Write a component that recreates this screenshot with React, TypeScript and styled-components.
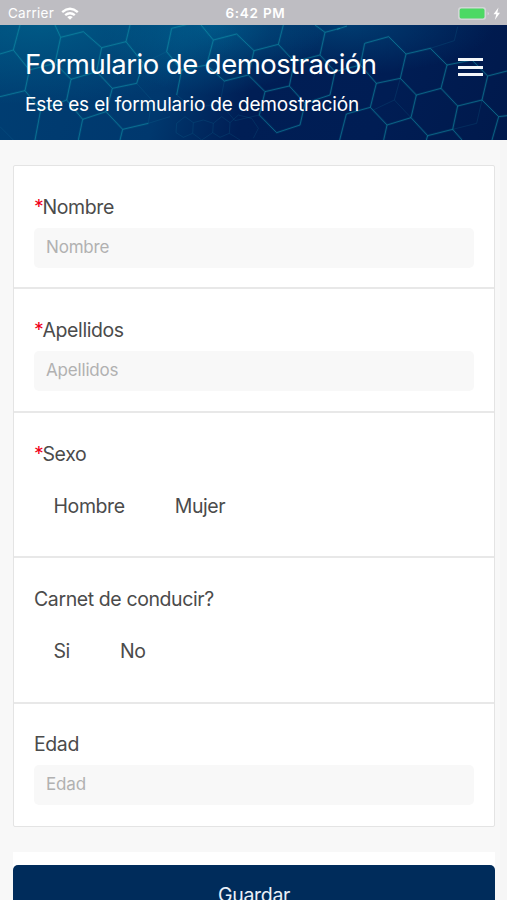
import React from 'react';
import styled, { createGlobalStyle } from 'styled-components';

const GlobalStyle = createGlobalStyle`
  * { box-sizing: border-box; }
  body {
    margin: 0;
    background: #f8f8f8;
    font-family: Inter, 'Liberation Sans', sans-serif;
    color: #4b4b4b;
  }
`;

const Screen = styled.div`
  height: 900px;
  overflow: hidden;
  display: flex;
  flex-direction: column;
  background: linear-gradient(90deg, #f8f8f8 500px, #f6f6f6 500px);
`;

const StatusBar = styled.div`
  flex: none;
  height: 25px;
  padding: 2px 6px 0 8px;
  display: grid;
  grid-template-columns: 1fr auto 1fr;
  align-items: center;
  background: #bebdc2;
  color: #fff;
  font-size: 13.5px;
  line-height: 23px;
`;

const Carrier = styled.div`
  display: flex;
  align-items: center;
  gap: 7px;
  letter-spacing: 0.25px;
`;

const Clock = styled.div`
  font-weight: 600;
  letter-spacing: 0.75px;
  padding-left: 2px;
`;

const Power = styled.div`
  display: flex;
  align-items: center;
  justify-content: flex-end;
`;

const Header = styled.header`
  flex: none;
  height: 115px;
  display: grid;
  background:
    radial-gradient(ellipse 200px 80px at 8% 0, rgba(0, 112, 150, 0.55), transparent),
    radial-gradient(ellipse 110px 70px at 42% 0, rgba(0, 108, 154, 0.6), transparent),
    radial-gradient(ellipse 150px 50px at 68% 0, rgba(0, 90, 140, 0.5), transparent),
    linear-gradient(108deg, #003e72 0%, #00386e 34%, #001e55 50%, #001d54 75%, #00194c 100%);
  color: #fff;
`;

const Pattern = styled.svg`
  grid-area: 1 / 1;
  width: 507px;
  height: 115px;
`;

const HeaderContent = styled.div`
  grid-area: 1 / 1;
  z-index: 1;
  display: flex;
  justify-content: space-between;
  padding: 22px 24px 0 25px;
`;

const Title = styled.h1`
  margin: 0;
  font-size: 27.5px;
  line-height: 34px;
  font-weight: 400;
  letter-spacing: -0.52px;
  white-space: nowrap;
`;

const Subtitle = styled.p`
  margin: 11px 0 0;
  font-size: 19px;
  line-height: 26px;
  letter-spacing: -0.15px;
  white-space: nowrap;
`;

const MenuButton = styled.button`
  margin-top: 11px;
  width: 25px;
  height: 18px;
  padding: 0;
  border: 0;
  background: none;
  display: flex;
  flex-direction: column;
  justify-content: space-between;
`;

const MenuBar = styled.span`
  height: 3px;
  width: 100%;
  background: #f4f7fa;
`;

const Form = styled.form`
  padding: 25px 12px 0 13px;
`;

const Card = styled.div`
  border: 1.5px solid #e4e4e4;
  border-radius: 2px;
  background: #fff;
`;

const Field = styled.section<{ $height: number }>`
  height: ${(p) => p.$height}px;
  padding: 28px 19px 0 20px;
  & + & {
    border-top: 2px solid #e8e8e8;
  }
  &:last-child {
    padding-top: 27px;
  }
`;

const Label = styled.label`
  display: block;
  height: 27px;
  line-height: 26px;
  font-size: 19.5px;
  letter-spacing: -0.4px;
`;

const Required = styled.span`
  display: inline-block;
  width: 8.5px;
  color: #f00018;
  letter-spacing: -1px;
`;

const Input = styled.input`
  display: block;
  width: 440px;
  height: 40px;
  margin-top: 7px;
  padding: 0 12px 2px;
  border: 0;
  border-radius: 5px;
  background: #f8f8f8;
  font: 17px Inter, sans-serif;
  letter-spacing: -0.18px;
  &::placeholder {
    color: #b1b1b1;
    opacity: 1;
  }
`;

const Options = styled.div`
  display: flex;
  gap: 50px;
  margin-top: 25px;
  padding-left: 19.5px;
  font-size: 19.5px;
  line-height: 26px;
  letter-spacing: -0.4px;
`;

const Actions = styled.div`
  margin-top: 25px;
  padding-top: 13px;
  background: #fff;
`;

const SaveButton = styled.button`
  display: block;
  width: 100%;
  height: 60px;
  border: 0;
  border-radius: 5px;
  background: #002c5b;
  color: #e9f0f8;
  font: 19.5px Inter, sans-serif;
  letter-spacing: -0.3px;
`;

const hexLines = [
  'M60 75L40 150L88 210L75 272L122 330L105 420M0 162L40 150M0 290L75 272',
  'M165 75L182 112L250 95L305 143L378 125L390 75M182 112L165 190L213 238L200 300L248 358L235 420M165 190L88 210M122 330L200 300',
  'M305 143L290 215L213 238M290 215L337 265L410 250L430 190L378 125M337 265L318 335L248 358M318 335L368 388L360 420M368 388L445 370',
  'M500 155L515 85L595 65L640 120L710 102L762 152L835 133L850 75M640 120L620 195L545 210L530 285M500 155L545 210',
  'M620 195L673 243L745 225L795 275L868 258L883 185L835 133M762 152L745 225M868 258L915 310L900 375L830 398L778 345L795 275',
  'M945 75L975 97L1020 85M975 97L960 165L883 185M960 165L1005 215L990 285L915 310M1005 215L1081 195',
  'M1094 130L1166 110L1218 162L1291 145L1341 195L1323 265L1249 285L1201 235L1218 162M1094 130L1081 195L1129 250L1201 235',
  'M1129 250L1111 322L1161 375L1233 353L1249 285M1233 353L1283 407L1358 388L1373 318L1323 265M1111 322L1039 342L1019 420M1161 375L1151 420',
  'M1373 318L1446 300L1463 228L1416 180L1341 195M1463 228L1521 213M1446 300L1496 350L1521 347M1496 350L1476 420M1358 388L1386 420M1283 407L1279 420M1011 88L1041 78',
];

const faintLines = [
  'M410 250L455 300L445 370L510 350M430 190L500 155M673 243L660 310L705 362L778 345M530 285L580 325L660 310',
  'M1291 145L1363 122L1373 80M1201 235L1183 300L1120 330M1183 300L1233 353M1446 300L1430 370L1358 388',
  'M0 380L40 420M530 370L555 350L580 368L578 400L550 412L528 398ZM640 370L665 350L690 368L688 400L660 412L638 398ZM580 368L610 360L640 370M578 400L605 420L638 398M690 368L715 345L755 355L775 385L760 415M688 400L720 420',
];

function HexPattern() {
  return (
    <Pattern viewBox="0 75 1521 345" fill="none" aria-hidden="true">
      <g stroke="#17a0b4" strokeOpacity="0.1" strokeWidth="8">
        {hexLines.map((d) => <path key={d} d={d} />)}
      </g>
      <g stroke="#119aae" strokeOpacity="0.5" strokeWidth="3">
        {hexLines.map((d) => <path key={d} d={d} />)}
      </g>
      <g stroke="#168aa6" strokeOpacity="0.16" strokeWidth="3">
        {faintLines.map((d) => <path key={d} d={d} />)}
      </g>
    </Pattern>
  );
}

function WifiIcon() {
  return (
    <svg width="18" height="14" viewBox="0 0 18 14" fill="none" stroke="#fff" strokeWidth="2.4">
      <path d="M1.2 5.2Q9-1.5 16.8 5.2M4.2 8.2Q9 4.2 13.8 8.2" />
      <path d="M9 12.8L6.2 10Q9 7.9 11.8 10Z" fill="#fff" stroke="none" />
    </svg>
  );
}

function BatteryIcon() {
  return (
    <svg width="43" height="14" viewBox="0 0 43 14">
      <rect x=".8" y=".8" width="26.5" height="11.4" rx="2.5" fill="#4cd964" stroke="#d3d5d7" strokeWidth="1.6" />
      <path d="M29.7 4.7Q32 6.5 29.7 8.2Z" fill="#e0e0e2" />
      <path d="M40.5.5L35.5 7.2H38.3L36.8 12.9L42 5.7H39.3Z" fill="#fff" />
    </svg>
  );
}

type FieldProps = { name: string; required?: boolean; height: number; options?: string[] };

const fields: FieldProps[] = [
  { name: 'Nombre', required: true, height: 121 },
  { name: 'Apellidos', required: true, height: 124 },
  { name: 'Sexo', required: true, height: 145, options: ['Hombre', 'Mujer'] },
  { name: 'Carnet de conducir?', height: 146, options: ['Si', 'No'] },
  { name: 'Edad', height: 124 },
];

function FormField({ name, required, height, options }: FieldProps) {
  return (
    <Field $height={height}>
      <Label>
        {required && <Required>*</Required>}
        {name}
      </Label>
      {options ? (
        <Options>{options.map((o) => <span key={o}>{o}</span>)}</Options>
      ) : (
        <Input placeholder={name} />
      )}
    </Field>
  );
}

export default function App() {
  return (
    <Screen>
      <GlobalStyle />
      <StatusBar>
        <Carrier>Carrier <WifiIcon /></Carrier>
        <Clock>6:42 PM</Clock>
        <Power><BatteryIcon /></Power>
      </StatusBar>
      <Header>
        <HexPattern />
        <HeaderContent>
          <div>
            <Title>Formulario de demostración</Title>
            <Subtitle>Este es el formulario de demostración</Subtitle>
          </div>
          <MenuButton type="button" aria-label="Menú">
            <MenuBar /><MenuBar /><MenuBar />
          </MenuButton>
        </HeaderContent>
      </Header>
      <Form>
        <Card>{fields.map((f) => <FormField key={f.name} {...f} />)}</Card>
        <Actions>
          <SaveButton type="button">Guardar</SaveButton>
        </Actions>
      </Form>
    </Screen>
  );
}
